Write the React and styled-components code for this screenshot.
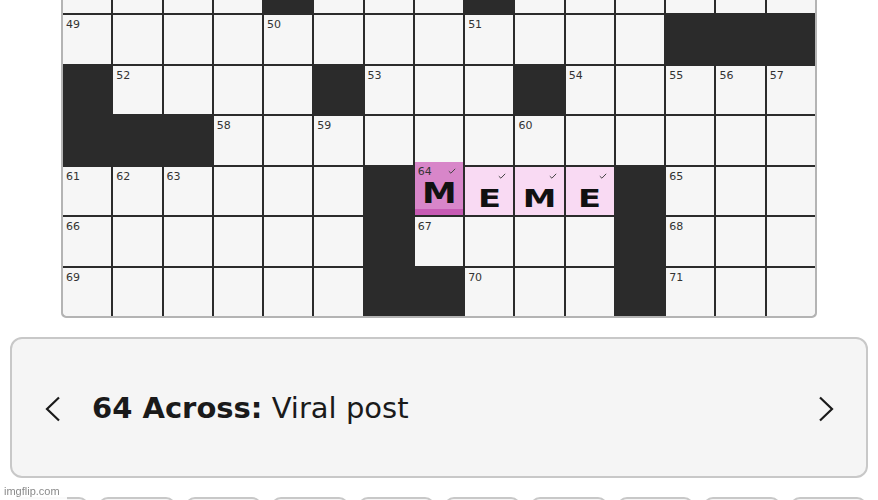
import styled, { createGlobalStyle } from "styled-components";

const GlobalStyle = createGlobalStyle`
  html, body {
    margin: 0;
    padding: 0;
    overflow: hidden;
    background: #ffffff;
  }
  body {
    font-family: "DejaVu Sans", "Liberation Sans", sans-serif;
  }
`;

// '#' = black square, '.' = open square
const rows = [
  "....#...#......",
  "............###",
  "#....#...#.....",
  "###............",
  "......#....#...",
  "......#....#...",
  "......##...#...",
];

const numbers = {
  "1-0": 49, "1-4": 50, "1-8": 51,
  "2-1": 52, "2-6": 53, "2-10": 54, "2-12": 55, "2-13": 56, "2-14": 57,
  "3-3": 58, "3-5": 59, "3-9": 60,
  "4-0": 61, "4-1": 62, "4-2": 63, "4-7": 64, "4-12": 65,
  "5-0": 66, "5-7": 67, "5-12": 68,
  "6-0": 69, "6-8": 70, "6-12": 71,
};

const letters = { "4-7": "M", "4-8": "E", "4-9": "M", "4-10": "E" };
const selected = "4-7";

const Check = () => (
  <CheckMark viewBox="0 0 8 6" width="8" height="6">
    <path d="M0.8 3.2 L2.9 5.2 L7.2 0.8" fill="none" stroke="#444" strokeWidth="1" />
  </CheckMark>
);

const Chevron = ({ dir }) => (
  <ChevronIcon viewBox="0 0 18 26" width="18" height="26">
    <polyline
      points={dir === "left" ? "15,1.5 3,13 15,24.5" : "3,1.5 15,13 3,24.5"}
      fill="none"
      stroke="#1a1a1a"
      strokeWidth="2.2"
    />
  </ChevronIcon>
);

const App = () => {
  return (
    <Page>
      <GlobalStyle />
      <Board>
        {rows.map((row, r) =>
          row.split("").map((ch, c) => {
            const key = `${r}-${c}`;
            if (ch === "#") return <Block key={key} />;
            const letter = letters[key];
            const state = key === selected ? "selected" : letter ? "word" : "plain";
            return (
              <Cell key={key} $state={state}>
                {numbers[key] && <Num>{numbers[key]}</Num>}
                {letter && <Check />}
                {letter && <Letter $big={state === "selected"}>{letter}</Letter>}
              </Cell>
            );
          })
        )}
      </Board>

      <ClueBar>
        <Chevron dir="left" />
        <ClueText>
          <strong>64 Across:</strong> Viral post
        </ClueText>
        <Chevron dir="right" />
      </ClueBar>

      <Keys>
        {Array.from({ length: 10 }).map((_, i) => (
          <Key key={i} />
        ))}
      </Keys>

      <Watermark>imgflip.com</Watermark>
    </Page>
  );
};

export default App;

const Page = styled.div`
  width: 878px;
  height: 500px;
  overflow: hidden;
  display: flex;
  flex-direction: column;
  align-items: center;
`;

const Board = styled.div`
  margin-top: -37.5px;
  display: grid;
  grid-template-columns: repeat(15, 48.27px);
  grid-template-rows: repeat(7, 48.5px);
  gap: 2px;
  background: #2b2b2b;
  border: 2px solid #b4b4b4;
  border-radius: 0 0 5px 5px;
  overflow: hidden;
  flex-shrink: 0;
`;

const Block = styled.div`
  background: #2b2b2b;
`;

const Cell = styled.div`
  position: relative;
  display: flex;
  align-items: flex-end;
  justify-content: center;
  background: ${(p) =>
    p.$state === "selected" ? "#d886c9" : p.$state === "word" ? "#f9daf3" : "#f6f6f6"};
  margin-top: ${(p) => (p.$state === "selected" ? "-5px" : "0")};
  box-shadow: ${(p) => (p.$state === "selected" ? "inset 0 -6px 0 #c75bb4" : "none")};
  padding-bottom: ${(p) => (p.$state === "selected" ? "7px" : "4px")};
  box-sizing: border-box;
`;

const Num = styled.span`
  position: absolute;
  top: 4px;
  left: 3px;
  font-family: "DejaVu Sans", sans-serif;
  font-size: 11px;
  line-height: 1;
  color: #333;
`;

const CheckMark = styled.svg`
  position: absolute;
  top: 6px;
  right: 7px;
`;

const Letter = styled.span`
  font-family: "DejaVu Sans", sans-serif;
  font-weight: 700;
  font-size: ${(p) => (p.$big ? "29px" : "25px")};
  line-height: 1;
  color: #111;
  transform: scaleX(${(p) => (p.$big ? 1.2 : 1.35)});
  transform-origin: center bottom;
`;

const ClueBar = styled.div`
  margin-top: 19px;
  width: 858px;
  height: 141px;
  box-sizing: border-box;
  display: flex;
  align-items: center;
  gap: 30px;
  padding: 0 31px 0 32px;
  background: #f5f5f5;
  border: 2px solid #c8c8c8;
  border-radius: 12px;
  flex-shrink: 0;
`;

const ChevronIcon = styled.svg`
  flex-shrink: 0;
  margin-top: 2px;
`;

const ClueText = styled.div`
  flex: 1;
  font-family: "DejaVu Sans", sans-serif;
  font-size: 29px;
  color: #1a1a1a;
  white-space: nowrap;
  strong {
    font-weight: 700;
  }
`;

const Keys = styled.div`
  margin-top: 19px;
  width: 878px;
  box-sizing: border-box;
  padding: 0 11px 0 12px;
  display: flex;
  gap: 9px;
  flex-shrink: 0;
`;

const Key = styled.div`
  flex: 1;
  height: 44px;
  background: #f5f5f5;
  border: 2px solid #c8c8c8;
  border-radius: 10px;
`;

const Watermark = styled.div`
  position: fixed;
  left: 0;
  top: 483px;
  width: 63px;
  height: 17px;
  padding-left: 4px;
  background: rgba(255, 255, 255, 0.9);
  font-family: "Liberation Sans", Arial, sans-serif;
  font-size: 11px;
  line-height: 17px;
  color: #8a8a8a;
`;
